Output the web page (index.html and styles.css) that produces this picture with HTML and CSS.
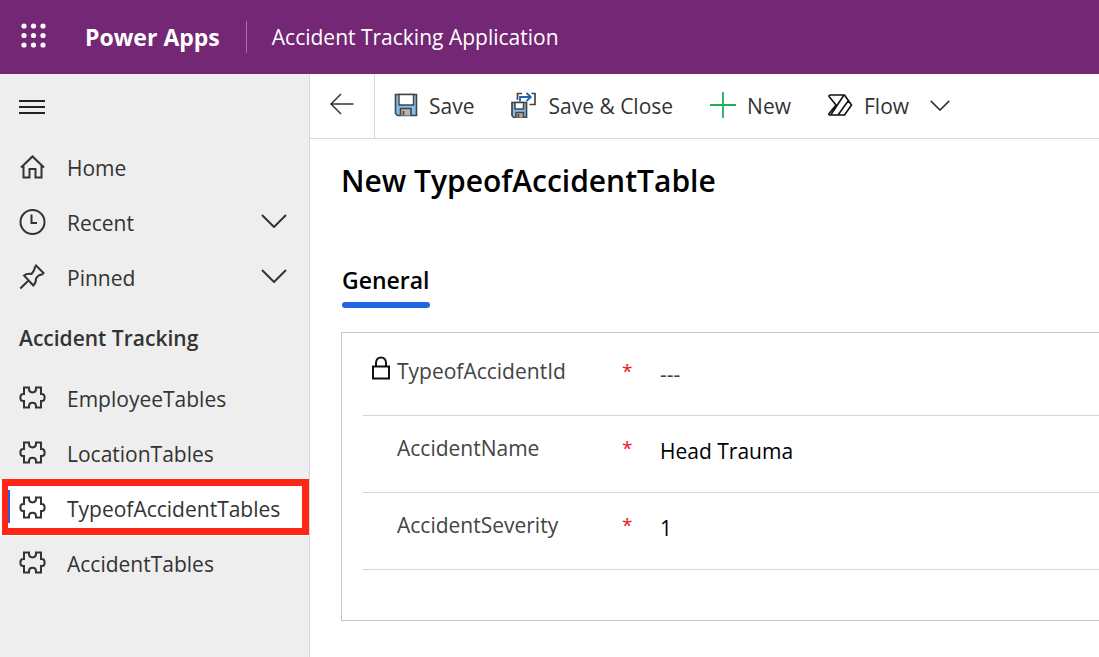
FILE: index.html
```html
<!DOCTYPE html>
<html lang="en">
<head>
<meta charset="utf-8">
<title>Accident Tracking Application - Power Apps</title>
<link rel="stylesheet" href="styles.css">
</head>
<body>
<svg class="defs" aria-hidden="true">
  <symbol id="puzzle" viewBox="0 0 26 24"><path d="M4.500 1.500H9.500V3C9.500 7.500 16.500 7.500 16.500 3V1.500H21.500V8H22.500C26 8 26 15 22.500 15H21.500V21.500H16.500V20C16.500 15.500 9.500 15.500 9.500 20V21.500H4.500V15H3.500C0 15 0 8 3.500 8H4.500Z"/></symbol>
  <symbol id="chevron" viewBox="0 0 26 14"><path d="M1 1L13 13L25 1"/></symbol>
</svg>
<header class="topbar">
  <button class="launcher" aria-label="App launcher">
    <svg width="26" height="26" viewBox="0 0 26 26"><g><circle cx="3" cy="3" r="2.600"/><circle cx="12.500" cy="3" r="2.600"/><circle cx="22" cy="3" r="2.600"/><circle cx="3" cy="12.500" r="2.600"/><circle cx="12.500" cy="12.500" r="2.600"/><circle cx="22" cy="12.500" r="2.600"/><circle cx="3" cy="22" r="2.600"/><circle cx="12.500" cy="22" r="2.600"/><circle cx="22" cy="22" r="2.600"/></g></svg>
  </button>
  <a class="brand" href="#">Power Apps</a>
  <span class="app-name">Accident Tracking Application</span>
</header>
<div class="shell">
  <nav class="sidebar" aria-label="Site map">
    <button class="menu" aria-label="Toggle site map">
      <svg width="26" height="16" viewBox="0 0 26 16"><path d="M0 2H26M0 8H26M0 14H26"/></svg>
    </button>
    <a class="nav-item" href="#"><svg class="nav-icon" viewBox="0 0 26 26"><path d="M1.500 13.500L13 2.500L24.500 13.500M4 11V23.500H10V15H16V23.500H22V11"/></svg><span>Home</span></a>
    <button class="nav-item"><svg class="nav-icon" viewBox="0 0 26 26"><circle cx="13" cy="13" r="12"/><path d="M12 5.500V14H17.500"/></svg><span class="grow">Recent</span><svg class="nav-chevron"><use href="#chevron"/></svg></button>
    <button class="nav-item"><svg class="nav-icon" viewBox="0 0 26 26"><path d="M.800 24.500L9.500 16M16.500 1.500L24 9L22.500 10.500C19 10.500 17.500 13 16.500 14.500C16.500 18 15.500 20 13.800 21.500L4.500 11.500C6.500 10 9 9.500 12 10C13.500 8.500 15 6.500 15.500 3Z"/></svg><span class="grow">Pinned</span><svg class="nav-chevron"><use href="#chevron"/></svg></button>
    <h2 class="group">Accident Tracking</h2>
    <a class="nav-item" href="#"><svg class="nav-icon puzzle"><use href="#puzzle"/></svg><span>EmployeeTables</span></a>
    <a class="nav-item" href="#"><svg class="nav-icon puzzle"><use href="#puzzle"/></svg><span>LocationTables</span></a>
    <a class="nav-item selected" href="#" aria-current="page"><svg class="nav-icon puzzle"><use href="#puzzle"/></svg><span>TypeofAccidentTables</span></a>
    <a class="nav-item" href="#"><svg class="nav-icon puzzle"><use href="#puzzle"/></svg><span>AccidentTables</span></a>
  </nav>
  <main class="content">
    <div class="commands">
      <button class="back" aria-label="Go back"><svg width="24" height="22" viewBox="0 0 24 22"><path d="M23.500 11H1.500M11 1L1 11L11 21"/></svg></button>
      <button class="command">
        <svg width="24" height="24" viewBox="0 0 24 24"><path d="M1.500 1.500H22.500V22.500H3.500L1.500 20.500Z" fill="#83bdea" stroke="#444" stroke-width="1.600"/><path d="M5 1.500H19.500V12H5Z" fill="#fff" stroke="#444" stroke-width="1.400"/><path d="M6.500 22.500V15.500H17V22.500" fill="#b8b3ae" stroke="#444" stroke-width="1.600"/><path d="M9.500 18V22" stroke="#444" stroke-width="1.600"/></svg>
        Save
      </button>
      <button class="command">
        <svg width="26" height="26" viewBox="0 0 26 26"><path d="M6.500 8V1.500H11M20.500 1.500H24V12.500H18.500" fill="none" stroke="#444" stroke-width="1.700"/><path d="M9 9.500V5H20M15.500 1L19.800 5L15.500 9" fill="none" stroke="#1769b5" stroke-width="1.800"/><path d="M1 10.500H15.500V25.500H3L1 23.500Z" fill="#83bdea" stroke="#444" stroke-width="1.700"/><path d="M4 10.500H12.500V17H4Z" fill="#fff" stroke="#444" stroke-width="1.500"/><path d="M5 25.500V20.500H12.500V25.500M7.500 22V25" fill="#aaa" stroke="#444" stroke-width="1.500"/></svg>
        Save &amp; Close
      </button>
      <button class="command">
        <svg width="26" height="26" viewBox="0 0 26 26"><path d="M0 13H26M13 0V26" stroke="#1fae54" stroke-width="1.800"/></svg>
        New
      </button>
      <button class="command">
        <svg width="25" height="22" viewBox="0 0 25 22"><path d="M3 1H16.500L23.500 11L16.500 21H2Q0 21 1.500 19L8 11L1.500 3Q0 1 3 1ZM16 1L3 20.500M20.500 6.500L10 21" fill="none" stroke="#111" stroke-width="1.600" stroke-linejoin="round"/></svg>
        Flow
        <svg class="flow-chevron"><use href="#chevron"/></svg>
      </button>
    </div>
    <div class="form">
      <h1 class="title">New TypeofAccidentTable</h1>
      <div class="tabs" role="tablist"><button class="tab" role="tab" aria-selected="true">General</button></div>
      <section class="card" aria-label="General">
        <div class="field">
          <svg class="lock" viewBox="0 0 18 24"><path d="M1 10.500H17V22.500H1ZM4 10.500V7C4 -.500 14 -.500 14 7V10.500"/></svg>
          <label for="type-id">TypeofAccidentId</label><span class="required">*</span>
          <input class="value muted" id="type-id" value="---" readonly>
        </div>
        <div class="field">
          <label for="name">AccidentName</label><span class="required">*</span>
          <input class="value" id="name" value="Head Trauma">
        </div>
        <div class="field">
          <label for="severity">AccidentSeverity</label><span class="required">*</span>
          <input class="value" id="severity" value="1">
        </div>
      </section>
    </div>
  </main>
</div>
</body>
</html>
```
FILE: styles.css
```css
* { box-sizing: border-box; }
body {
  margin: 0;
  min-height: 100vh;
  display: flex;
  flex-direction: column;
  font: 21px/28px "Open Sans", "Noto Sans", sans-serif;
  color: #333;
  background: #fff;
}
button, input { font: inherit; color: inherit; background: none; border: 0; padding: 0; margin: 0; }
a { color: inherit; text-decoration: none; }
svg { flex: none; }
.defs { position: absolute; width: 0; height: 0; }

.topbar { height: 74px; display: flex; align-items: center; background: #742774; color: #fff; padding-left: 21px; }
.launcher { display: flex; width: 64px; padding-bottom: 3px; }
.launcher svg { fill: #fff; }
.brand { font-size: 23px; font-weight: 700; }
.app-name { margin-left: 26px; padding-left: 25px; border-left: 1px solid #a473a4; line-height: 32px; }

.shell { flex: 1; display: flex; }
.sidebar { flex: 0 0 310px; background: #eee; border-right: 1px solid #d6d6d6; }
.menu { display: flex; align-items: center; height: 66px; padding-left: 19px; }
.menu svg { stroke: #222; stroke-width: 2; }
.nav-item { position: relative; display: flex; align-items: center; gap: 21px; width: 100%; height: 55px; padding: 0 22px 0 19px; text-align: left; }
.nav-icon, .nav-chevron, .flow-chevron, .back svg, .lock { fill: none; stroke: #333; stroke-width: 2; }
.nav-icon { width: 27px; height: 26px; margin-bottom: 2px; }
.puzzle { height: 24px; }
.nav-chevron { width: 26px; height: 14px; margin-bottom: 3px; }
.grow { flex: 1; }
.group { margin: 0; padding-left: 19px; font-size: 21px; font-weight: 600; line-height: 66px; }
.selected { background: #fff; }
.selected::before { content: ""; position: absolute; left: 8px; top: 9px; width: 2px; height: 33px; background: #2f5fdf; }
/* Callout frame around the active table */
.selected::after { content: ""; position: absolute; inset: -2px 0 1px 2px; border: 7px solid #ff2617; border-left-width: 6px; }

.content { flex: 1; min-width: 0; }
.commands { display: flex; height: 65px; border-bottom: 1px solid #d6d6d6; }
.back { flex: none; width: 65px; display: flex; align-items: center; justify-content: center; border-right: 1px solid #d6d6d6; padding-bottom: 4px; }
.back svg { stroke-width: 1.500px; }
.command { display: flex; align-items: center; gap: 11px; margin-right: 18px; padding-left: 19px; white-space: nowrap; }
.command svg { margin-bottom: 2px; }
.flow-chevron { width: 20px; height: 11px; margin-left: 10px; }

.form { padding: 22px 0 38px 31px; }
.title { margin: 0; font-size: 30px; font-weight: 600; line-height: 40px; color: #000; }
.tabs { display: flex; margin: 63px 0 24px; padding-left: 1px; }
.tab { font-size: 23px; font-weight: 600; line-height: 32px; color: #000; position: relative; height: 44px; display: flex; }
.tab::after { content: ""; position: absolute; left: 0; right: 0; bottom: 0; height: 6px; border-radius: 3px; background: #2266e3; }
.card { border: 1px solid #c8c6c8; border-right: 0; padding: 6px 0 50px 21px; }
.field { position: relative; display: grid; grid-template-columns: 225px 38px 1fr; height: 77px; padding: 18px 0 0 34px; border-bottom: 1px solid #d6d6d6; color: #444; }
.required { color: #f00f1b; font-size: 19px; }
.value { height: 28px; margin-top: 3px; width: 100%; min-width: 0; font-weight: 500; color: #000; }
.muted { color: #444; }
.lock { position: absolute; left: 9px; top: 17px; width: 18px; height: 24px; stroke: #111; }
```
